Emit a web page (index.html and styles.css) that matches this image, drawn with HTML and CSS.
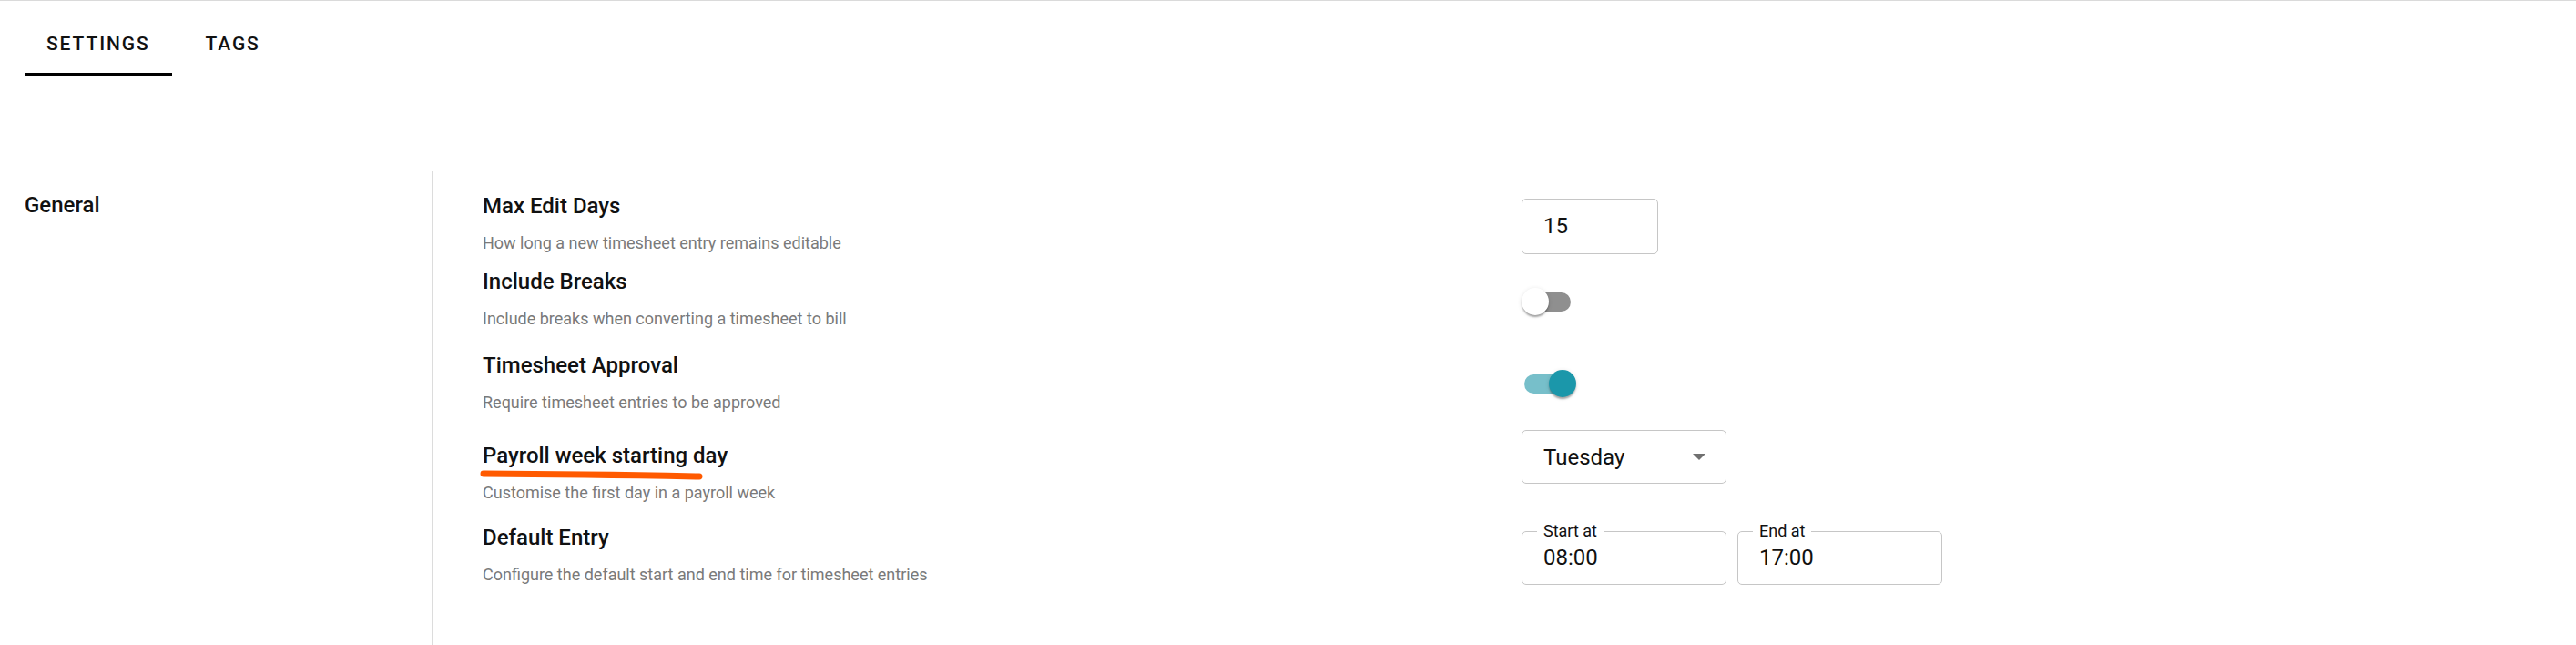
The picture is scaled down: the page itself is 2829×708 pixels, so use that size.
FILE: index.html
```html
<!DOCTYPE html>
<html lang="en">
<head>
<meta charset="utf-8">
<title>Settings</title>
<link rel="stylesheet" href="styles.css">
</head>
<body>
<div class="page">
  <nav class="tabs">
    <div class="tab tab--active">Settings</div>
    <div class="tab">Tags</div>
  </nav>

  <section class="group">
    <div class="group-side">
      <h2 class="group-title">General</h2>
    </div>
    <div class="group-body">
      <div class="row">
        <div class="row-text">
          <div class="row-title">Max Edit Days</div>
          <div class="row-desc">How long a new timesheet entry remains editable</div>
        </div>
        <div class="row-control">
          <div class="field field--number">15</div>
        </div>
      </div>

      <div class="row">
        <div class="row-text">
          <div class="row-title">Include Breaks</div>
          <div class="row-desc">Include breaks when converting a timesheet to bill</div>
        </div>
        <div class="row-control switch-wrap">
          <div class="switch">
            <span class="switch-track"></span>
            <span class="switch-thumb"></span>
          </div>
        </div>
      </div>

      <div class="row row--approval">
        <div class="row-text">
          <div class="row-title">Timesheet Approval</div>
          <div class="row-desc">Require timesheet entries to be approved</div>
        </div>
        <div class="row-control switch-wrap">
          <div class="switch switch--on">
            <span class="switch-track"></span>
            <span class="switch-thumb"></span>
          </div>
        </div>
      </div>

      <div class="row row--payroll">
        <div class="row-text">
          <div class="row-title"><span class="marked">Payroll week starting day<svg class="scribble" width="246" height="14" viewBox="0 0 246 14"><path d="M4 5 Q112 5.5 241 8" fill="none" stroke="#ff5a00" stroke-width="7" stroke-linecap="round"/></svg></span></div>
          <div class="row-desc">Customise the first day in a payroll week</div>
        </div>
        <div class="row-control select-wrap">
          <div class="field field--select">
            <span>Tuesday</span>
            <span class="select-arrow"></span>
          </div>
        </div>
      </div>

      <div class="row row--entry">
        <div class="row-text">
          <div class="row-title">Default Entry</div>
          <div class="row-desc">Configure the default start and end time for timesheet entries</div>
        </div>
        <div class="row-control time-pair">
          <div class="field field--time">
            <span class="field-label">Start at</span>
            <span>08:00</span>
          </div>
          <div class="field field--time">
            <span class="field-label">End at</span>
            <span>17:00</span>
          </div>
        </div>
      </div>
    </div>
  </section>
</div>
</body>
</html>
```

FILE: styles.css
```css
* {
  box-sizing: border-box;
}

html, body {
  margin: 0;
  padding: 0;
  background: #fff;
  height: 100%;
  overflow: hidden;
}

body {
  font-family: Roboto, "Liberation Sans", Arial, sans-serif;
  color: #111;
}

.page {
  display: flex;
  flex-direction: column;
  height: 100vh;
  border-top: 1px solid #dadada;
  padding-left: 27px;
}

/* Tabs */
.tabs {
  display: flex;
}

.tab {
  min-width: 134px;
  padding: 37px 24px 21px;
  border-bottom: 3px solid transparent;
  font-size: 21px;
  line-height: 21px;
  font-weight: 500;
  letter-spacing: 1.9px;
  text-transform: uppercase;
  text-align: center;
  color: #111;
}

.tab--active {
  border-bottom-color: #000;
}

/* Group */
.group {
  flex: 1;
  display: grid;
  grid-template-columns: 447px 1fr;
  margin-top: 105px;
}

.group-side {
  padding-top: 25px;
}

.group-title {
  margin: 0;
  font-size: 24px;
  line-height: 24px;
  font-weight: 500;
  color: #111;
}

.group-body {
  border-left: 1px solid #dcdcdc;
  padding: 26px 0 0 55px;
  display: flex;
  flex-direction: column;
}

.row {
  display: grid;
  grid-template-columns: 1141px auto;
  align-items: center;
}

.row + .row {
  margin-top: 8px;
}

.row--approval .row-text {
  padding-top: 4px;
}

.row + .row--payroll {
  margin-top: 10px;
}

.row + .row--entry {
  margin-top: 6px;
}

.row-title {
  font-size: 24px;
  line-height: 24px;
  font-weight: 500;
  color: #111;
}

.row-desc {
  margin-top: 14px;
  font-size: 18px;
  line-height: 30px;
  color: #7a7a7a;
}

.marked {
  position: relative;
  display: inline-block;
}

.scribble {
  position: absolute;
  left: -3px;
  top: calc(100% + 3px);
}

/* Fields */
.field {
  border: 1px solid #c6c6c6;
  border-radius: 5px;
  font-size: 24px;
  color: #111;
  display: flex;
  align-items: center;
  padding-left: 23px;
}

.field--number {
  width: 150px;
  height: 61px;
}

.select-wrap {
  padding-bottom: 41px;
}

.field--select {
  width: 225px;
  height: 59px;
  justify-content: space-between;
  padding-right: 22px;
}

.select-arrow {
  width: 0;
  height: 0;
  border-left: 7.5px solid transparent;
  border-right: 7.5px solid transparent;
  border-top: 7.5px solid #707070;
}

.time-pair {
  display: flex;
  gap: 12px;
}

.field--time {
  position: relative;
  width: 225px;
  height: 59px;
}

.field-label {
  position: absolute;
  top: -10px;
  left: 16px;
  padding: 0 7px;
  background: #fff;
  font-size: 18px;
  line-height: 18px;
  color: #111;
}

/* Switches */
.switch-wrap {
  height: 82px;
  display: flex;
  align-items: center;
}

.switch {
  position: relative;
  width: 60px;
  height: 30px;
}

.switch-track {
  position: absolute;
  left: 3px;
  top: 4.5px;
  width: 51px;
  height: 21px;
  border-radius: 10.5px;
  background: #8f8f8f;
}

.switch-thumb {
  position: absolute;
  top: 0;
  left: 0;
  width: 30px;
  height: 30px;
  border-radius: 50%;
  background: #fff;
  box-shadow: 0 3px 2px -1px rgba(0, 0, 0, 0.2), 0 2px 2px 0 rgba(0, 0, 0, 0.14), 0 1px 5px 0 rgba(0, 0, 0, 0.12);
}

.switch--on .switch-track {
  background: #77bfca;
}

.switch--on .switch-thumb {
  left: 30px;
  background: #1b97aa;
}
```
